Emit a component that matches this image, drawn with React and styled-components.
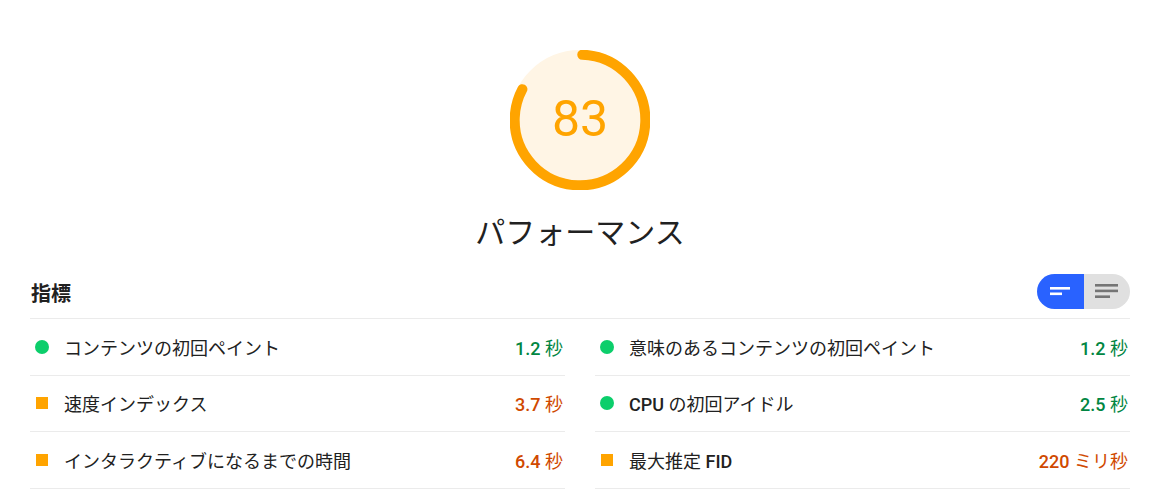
import * as React from 'react';
import styled, { createGlobalStyle } from 'styled-components';

const passColor = '#0cce6b';
const passText = '#018642';
const avgColor = '#ffa400';
const avgText = '#d04900';
const lineColor = '#ebebeb';

const GlobalStyle = createGlobalStyle`
  html, body {
    margin: 0;
    padding: 0;
    background: #fff;
  }
  body {
    font-family: Roboto, "Noto Sans CJK JP", sans-serif;
    color: #212121;
  }
`;

const Page = styled.div`
  padding: 50px 24px 0 30px;
  width: 1100px;
`;

const GaugeSection = styled.div`
  display: flex;
  flex-direction: column;
  align-items: center;
`;

const GaugeWrap = styled.div`
  position: relative;
  width: 140px;
  height: 140px;
`;

const GaugeValue = styled.div`
  position: absolute;
  inset: 0;
  display: flex;
  align-items: center;
  justify-content: center;
  font-size: 50px;
  font-weight: 400;
  color: ${avgColor};
  padding-bottom: 2px;
`;

const GaugeTitle = styled.div`
  margin-top: 22px;
  font-size: 30px;
  line-height: 36px;
  font-family: "Noto Sans CJK JP", sans-serif;
  color: #212121;
`;

const MetricsHeader = styled.div`
  margin-top: 24px;
  display: flex;
  align-items: center;
  justify-content: space-between;
  padding-bottom: 8px;
  border-bottom: 1px solid ${lineColor};
`;

const HeaderTitle = styled.h2`
  margin: 0;
  font-size: 20px;
  font-weight: 700;
  line-height: 35px;
  padding-top: 3px;
  padding-left: 1px;
  font-family: "Noto Sans CJK JP", sans-serif;
`;

const Toggle = styled.div`
  display: flex;
  width: 93px;
  height: 35px;
  border-radius: 18px;
  overflow: hidden;
`;

const ToggleButton = styled.div`
  flex: 1;
  display: flex;
  align-items: center;
  justify-content: center;
  background: ${({ $active }) => ($active ? '#2962ff' : '#e0e0e0')};
`;

const Grid = styled.div`
  display: grid;
  grid-template-columns: 1fr 1fr;
  column-gap: 30px;
`;

const Row = styled.div`
  display: flex;
  align-items: center;
  height: 55.5px;
  border-bottom: 1px solid ${lineColor};
  padding: 0 2px 0 5px;
`;

const Marker = styled.span`
  flex: none;
  width: ${({ $kind }) => ($kind === 'pass' ? '14px' : '12px')};
  height: ${({ $kind }) => ($kind === 'pass' ? '14px' : '12px')};
  margin-left: ${({ $kind }) => ($kind === 'pass' ? '0' : '1px')};
  margin-right: ${({ $kind }) => ($kind === 'pass' ? '15px' : '16px')};
  border-radius: ${({ $kind }) => ($kind === 'pass' ? '50%' : '0')};
  background: ${({ $kind }) => ($kind === 'pass' ? passColor : avgColor)};
`;

const MetricName = styled.span`
  flex: 1;
  font-size: 18px;
  color: #212121;
  font-family: Roboto, "Noto Sans CJK JP", sans-serif;
  b {
    font-weight: 500;
  }
`;

const MetricValue = styled.span`
  font-size: 18px;
  font-weight: 500;
  color: ${({ $kind }) => ($kind === 'pass' ? passText : avgText)};
  span {
    font-weight: 400;
    font-family: "Noto Sans CJK JP", sans-serif;
  }
`;

const metrics = [
  { name: 'コンテンツの初回ペイント', num: '1.2', unit: '秒', kind: 'pass' },
  { name: '意味のあるコンテンツの初回ペイント', num: '1.2', unit: '秒', kind: 'pass' },
  { name: '速度インデックス', num: '3.7', unit: '秒', kind: 'avg' },
  { name: <><b>CPU</b> の初回アイドル</>, num: '2.5', unit: '秒', kind: 'pass' },
  { name: 'インタラクティブになるまでの時間', num: '6.4', unit: '秒', kind: 'avg' },
  { name: <>最大推定 <b>FID</b></>, num: '220', unit: 'ミリ秒', kind: 'avg' },
];

function Gauge({ score }) {
  const r = 56;
  const circ = 2 * Math.PI * r;
  return (
    <GaugeWrap>
      <svg width="140" height="140" viewBox="0 0 120 120">
        <circle cx="60" cy="60" r={r} fill="#fff5e5" stroke="#fff5e5" strokeWidth="8" />
        <circle
          cx="60"
          cy="60"
          r={r}
          fill="none"
          stroke={avgColor}
          strokeWidth="8.6"
          strokeLinecap="round"
          strokeDasharray={`${(score / 100) * circ - 3} ${circ}`}
          transform="rotate(-88 60 60)"
        />
      </svg>
      <GaugeValue>{score}</GaugeValue>
    </GaugeWrap>
  );
}

export default function App() {
  return (
    <Page>
      <GlobalStyle />
      <GaugeSection>
        <Gauge score={83} />
        <GaugeTitle>パフォーマンス</GaugeTitle>
      </GaugeSection>
      <MetricsHeader>
        <HeaderTitle>指標</HeaderTitle>
        <Toggle>
          <ToggleButton $active>
            <svg width="22" height="12" viewBox="0 0 22 12">
              <rect x="1" y="2" width="20" height="2.6" fill="#fff" />
              <rect x="1" y="7.5" width="12" height="2.6" fill="#fff" />
            </svg>
          </ToggleButton>
          <ToggleButton>
            <svg width="26" height="18" viewBox="0 0 26 18">
              <rect x="1" y="2" width="23" height="2.6" fill="#757575" />
              <rect x="1" y="7.6" width="23" height="2.6" fill="#757575" />
              <rect x="1" y="13.4" width="15" height="2.6" fill="#757575" />
            </svg>
          </ToggleButton>
        </Toggle>
      </MetricsHeader>
      <Grid>
        {metrics.map((m, i) => (
          <Row key={i}>
            <Marker $kind={m.kind} />
            <MetricName>{m.name}</MetricName>
            <MetricValue $kind={m.kind}>
              {m.num} <span>{m.unit}</span>
            </MetricValue>
          </Row>
        ))}
      </Grid>
    </Page>
  );
}
